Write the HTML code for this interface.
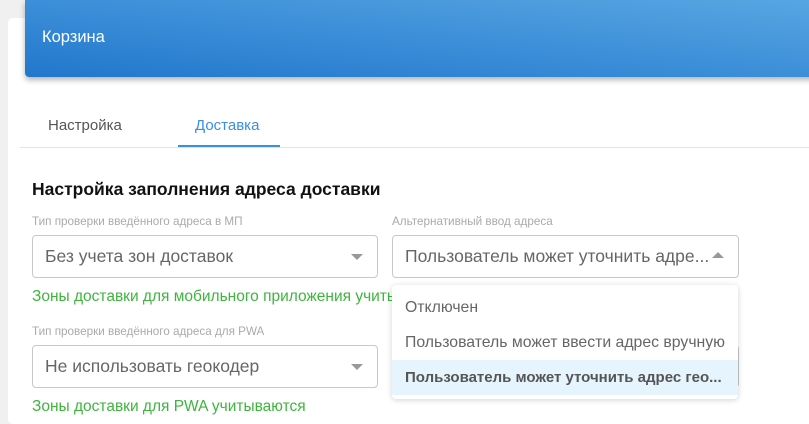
<!DOCTYPE html>
<html><head><meta charset="utf-8"><style>
html,body{margin:0;width:809px;height:424px;overflow:hidden}
body{background:#f0f0f0;position:relative;font-family:"Liberation Sans",Arial,sans-serif}
.card{position:absolute;left:8px;top:18px;width:810px;height:406px;background:#fff;border-radius:5px}
.hdr{position:absolute;left:25px;top:0;width:800px;height:77px;background:linear-gradient(to top right,#2277cc 0%,#3c8fd8 50%,#58a6e2 100%);border-radius:0 0 4px 4px;box-shadow:0 3px 6px rgba(0,0,0,.3)}
.hdr span{position:absolute;left:17px;top:28px;color:#fff;font-size:16.5px}
.tab{position:absolute;top:117px;font-size:15px;color:#555}
.line{position:absolute;left:20px;top:147px;width:800px;height:1px;background:#e4e4e4}
.ul{position:absolute;left:178px;top:145px;width:102px;height:2px;background:#3a8ee6}
h3{position:absolute;left:32px;top:179px;margin:0;font-size:17.5px;font-weight:bold;color:#111}
.lbl{position:absolute;font-size:11.7px;color:#aaa;white-space:nowrap}
.box{position:absolute;border:1px solid #c8c8c8;border-radius:4px;height:43px;box-sizing:border-box;background:#fff}
.box span{position:absolute;left:12px;top:10px;font-size:17.5px;color:#666;white-space:nowrap}
.arr{position:absolute;right:14px;top:18px;width:0;height:0;border-left:6px solid transparent;border-right:6px solid transparent;border-top:6px solid #999}
.up{border-top:0;border-bottom:6px solid #999;top:16px}
.hint{position:absolute;font-size:15.5px;color:#3db53d;white-space:nowrap}
.dd{position:absolute;left:392px;top:285px;width:346px;height:114px;background:#fff;border-radius:4px;box-shadow:0 1px 6px rgba(0,0,0,.18);z-index:5}
.opt{position:absolute;left:0;width:100%;height:35px;font-size:15.8px;color:#666;padding-left:13px;box-sizing:border-box;line-height:35px;white-space:nowrap;overflow:hidden}
</style></head><body>
<div class="card"></div>
<div class="hdr"><span>Корзина</span></div>
<div class="tab" style="left:48px">Настройка</div>
<div class="tab" style="left:195px;color:#3a8ee6">Доставка</div>
<div class="line"></div><div class="ul"></div>
<h3>Настройка заполнения адреса доставки</h3>
<div class="lbl" style="left:32px;top:215px">Тип проверки введённого адреса в МП</div>
<div class="lbl" style="left:392px;top:215px">Альтернативный ввод адреса</div>
<div class="box" style="left:32px;top:235px;width:346px"><span>Без учета зон доставок</span><i class="arr"></i></div>
<div class="box" style="left:392px;top:235px;width:347px"><span>Пользователь может уточнить адре...</span><i class="arr up"></i></div>
<div class="hint" style="left:32px;top:288px">Зоны доставки для мобильного приложения учиты</div>
<div class="lbl" style="left:32px;top:325px">Тип проверки введённого адреса для PWA</div>
<div class="box" style="left:32px;top:345px;width:346px"><span>Не использовать геокодер</span><i class="arr"></i></div>
<div class="box" style="left:392px;top:345px;width:347px"></div>
<div class="hint" style="left:32px;top:398px">Зоны доставки для PWA учитываются</div>
<div class="dd">
<div class="opt" style="top:5px">Отключен</div>
<div class="opt" style="top:40px">Пользователь может ввести адрес вручную</div>
<div class="opt" style="top:75px;background:#e6f4fd;font-weight:bold;color:#555;font-size:15px">Пользователь может уточнить адрес гео...</div>
</div>
</body></html>
